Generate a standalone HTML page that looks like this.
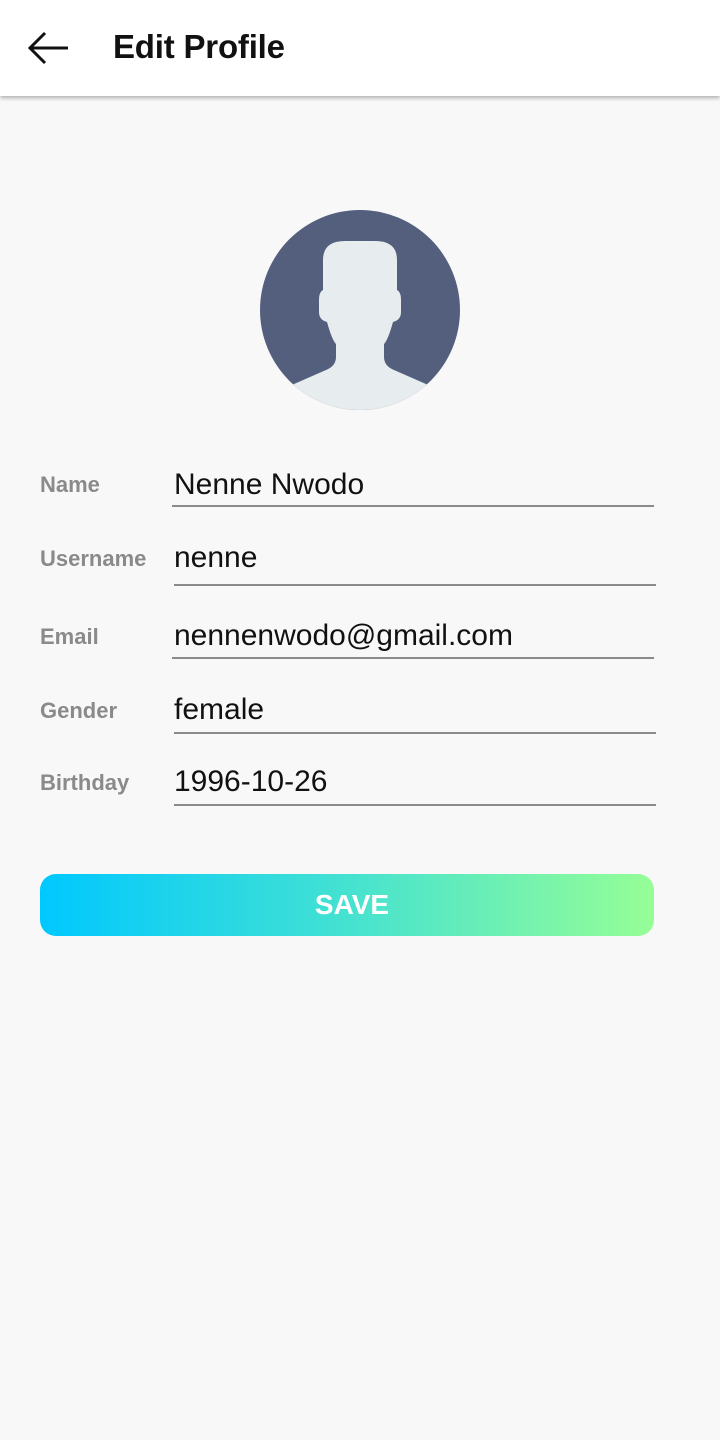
<!DOCTYPE html>
<html><head><meta charset="utf-8"><style>
*{margin:0;padding:0;box-sizing:border-box}
body{width:720px;height:1440px;background:#f8f8f8;font-family:"Liberation Sans",sans-serif;position:relative;overflow:hidden}
.hdr{position:absolute;left:0;top:0;width:720px;height:96px;background:#fff;box-shadow:0 2px 4px rgba(0,0,0,.3)}
.title{position:absolute;left:113px;top:28px;font-size:33px;font-weight:bold;color:#111;letter-spacing:-0.2px}
.lbl{position:absolute;left:40px;font-size:22px;color:#8a8a8a;font-weight:bold}
.val{position:absolute;left:174px;font-size:30px;color:#111}
.ln{position:absolute;height:2px;background:#8a8a8a}
.btn{position:absolute;left:40px;top:874px;width:614px;height:62px;border-radius:16px;background:linear-gradient(90deg,#00c8ff,#3ddfd6 45%,#96fe96);color:#fff;font-weight:bold;font-size:28px;text-align:center;line-height:62px;padding-left:10px}
</style></head><body>
<div class="hdr">
<svg style="position:absolute;left:26px;top:30px" width="44" height="36" viewBox="0 0 44 36"><path d="M42 18H4M19 3L4 18l15 15" fill="none" stroke="#111" stroke-width="3"/></svg>
<div class="title">Edit Profile</div>
</div>
<svg style="position:absolute;left:260px;top:210px" width="200" height="200" viewBox="0 0 200 200">
<defs><clipPath id="c"><circle cx="100" cy="100" r="100"/></clipPath></defs>
<circle cx="100" cy="100" r="100" fill="#545f7e"/>
<g clip-path="url(#c)" fill="#e7ecee">
<path d="M63 80V50Q63 31 85 31H115Q137 31 137 50V80Q141 82 141 90V102Q141 110 133 112Q128 130 124 134V147Q124 156 134 160L175 178L175 210H25V178L66 160Q76 156 76 147V134Q72 130 67 112Q59 110 59 102V90Q59 82 63 80Z"/>
</g>
</svg>
<div class="lbl" style="top:472px">Name</div><div class="val" style="top:468px">Nenne Nwodo</div><div class="ln" style="left:172px;top:505px;width:482px"></div>
<div class="lbl" style="top:546px">Username</div><div class="val" style="top:541px">nenne</div><div class="ln" style="left:174px;top:584px;width:482px"></div>
<div class="lbl" style="top:624px">Email</div><div class="val" style="top:619px">nennenwodo@gmail.com</div><div class="ln" style="left:172px;top:657px;width:482px"></div>
<div class="lbl" style="top:698px">Gender</div><div class="val" style="top:693px">female</div><div class="ln" style="left:174px;top:732px;width:482px"></div>
<div class="lbl" style="top:770px">Birthday</div><div class="val" style="top:765px">1996-10-26</div><div class="ln" style="left:174px;top:804px;width:482px"></div>
<div class="btn">SAVE</div>
</body></html>
